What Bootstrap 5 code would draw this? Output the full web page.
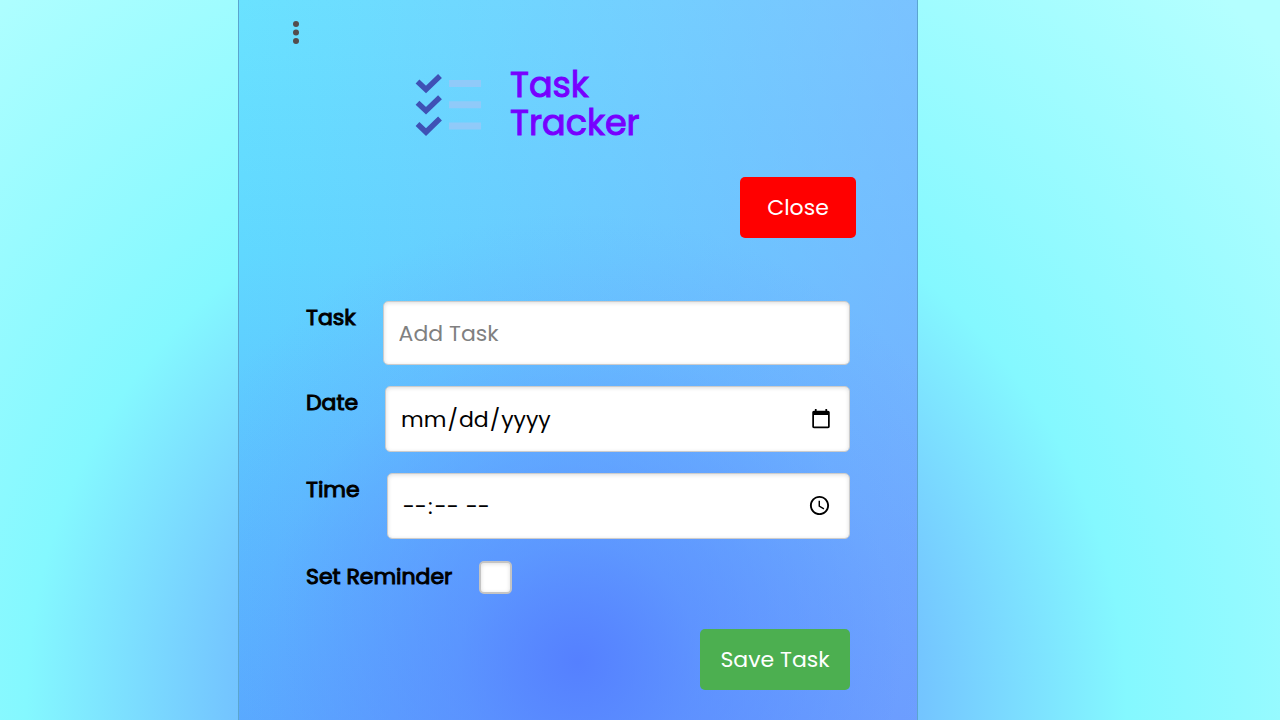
<!DOCTYPE html>
<html lang="en">
<head>
<meta charset="utf-8">
<meta name="viewport" content="width=device-width, initial-scale=1">
<title>Task Tracker</title>
<link rel="stylesheet" href="https://cdn.jsdelivr.net/npm/bootstrap@5.3.0/dist/css/bootstrap.min.css">
<style>
  body {
    min-height: 100vh;
    font-family: Poppins, Inter, sans-serif;
    font-size: 22px;
    line-height: 34px;
    color: #000;
    background: radial-gradient(circle at 45% 98%, #5580ff 0, #74c6ff 350px, #84f8ff 550px, #b4ffff 960px, #b4ffff 100%) no-repeat;
  }
  .page-grid {
    display: grid;
    grid-template-columns: 119fr minmax(0, 680px) 181fr;
    min-height: 100vh;
  }
  .tracker {
    grid-column: 2;
    padding: 18px 67px 30px;
    border: solid #5aa5d0;
    border-width: 0 1px;
    background:
      radial-gradient(circle at 50% 92%, #5580ff 0, rgba(85, 128, 255, .55) 120px, rgba(85, 128, 255, .12) 320px, rgba(85, 128, 255, 0) 450px),
      linear-gradient(to right, rgba(150, 138, 255, 0), rgba(150, 138, 255, .36)),
      linear-gradient(#6ae2ff, #60d8ff 35%, #5aaeff);
  }
  .menu-btn { margin-left: -20px; }
  .brand { padding-left: 108px; gap: 28px; }
  .brand-title { font-size: 35px; line-height: 38px; font-weight: 400; color: #70f; -webkit-text-stroke: 1px #70f; }
  .action { border-radius: 5px; color: #fff; height: 61px; font-size: 22px; }
  .action-row { margin-top: 35px; }
  .action-close { background: red; width: 116px; margin-right: -6px; }
  .action-save { background: #4caf50; width: 150px; }
  .action-close:hover { background: #d00; color: #fff; }
  .action-save:hover { background: #3e9142; color: #fff; }
  .task-form { margin-top: 63px; gap: 21px; }
  .save-row { margin-top: 14px; }
  .field { gap: 27px; }
  .field label { -webkit-text-stroke: 1px #000; }
  .field .form-control {
    height: 66px;
    flex: 1;
    min-width: 0;
    padding: 0 15px;
    font-size: 22px;
    color: #000;
    border: 1px solid #ccc;
    border-radius: 5px;
    box-shadow: inset 0 1px 4px #ddd;
  }
  .field .title-input { height: 64px; }
  .field .form-control::placeholder { color: #808080; }
  .field .form-control::-webkit-datetime-edit-text { padding: 0 1px; }
  .tick {
    appearance: none;
    width: 33px;
    height: 33px;
    background: #fff;
    border: 2px solid #c4c4c4;
    border-radius: 5px;
    box-shadow: inset 0 1px 4px #ddd;
  }
  .tick:checked { background: #4caf50; }
</style>
</head>
<body>
<div class="page-grid">
  <main class="tracker">
    <button type="button" class="menu-btn btn p-0 border-0 d-block lh-1" aria-label="Menu">
      <svg class="d-block" width="18" height="28" viewBox="0 0 18 28" fill="#544d4d"><circle cx="10" cy="6" r="3"/><circle cx="10" cy="14.500" r="3"/><circle cx="10" cy="23" r="3"/></svg>
    </button>
    <header class="brand d-flex align-items-center mt-3 pt-1">
      <svg width="68" height="64" viewBox="0 0 68 64" aria-hidden="true">
        <g fill="none" stroke="#3f51b5" stroke-width="5.500"><path d="M3.500 9.500l8.500 8L26 4"/><path d="M3.500 30.800l8.500 8L26 25.300"/><path d="M3.500 52.100l8.500 8L26 46.600"/></g>
        <path fill="#90caf9" d="M35 8h32v7H35zM35 29.300h32v7H35zM35 50.600h32v7H35z"/>
      </svg>
      <h1 class="brand-title m-0">Task<br>Tracker</h1>
    </header>
    <div class="action-row d-flex justify-content-end">
      <button type="button" class="action action-close btn border-0 p-0">Close</button>
    </div>
    <form class="task-form d-flex flex-column">
      <div class="field d-flex">
        <label for="task">Task</label>
        <input class="form-control title-input" id="task" type="text" placeholder="Add Task">
      </div>
      <div class="field d-flex">
        <label for="day">Date</label>
        <input class="form-control" id="day" type="date">
      </div>
      <div class="field d-flex">
        <label for="hour">Time</label>
        <input class="form-control" id="hour" type="time">
      </div>
      <div class="field d-flex align-items-center">
        <label for="reminder">Set Reminder</label>
        <input class="tick" id="reminder" type="checkbox">
      </div>
      <div class="save-row d-flex justify-content-end">
        <button type="submit" class="action action-save btn border-0 p-0">Save Task</button>
      </div>
    </form>
  </main>
</div>
<script src="https://cdn.jsdelivr.net/npm/bootstrap@5.3.0/dist/js/bootstrap.bundle.min.js"></script>
</body>
</html>
